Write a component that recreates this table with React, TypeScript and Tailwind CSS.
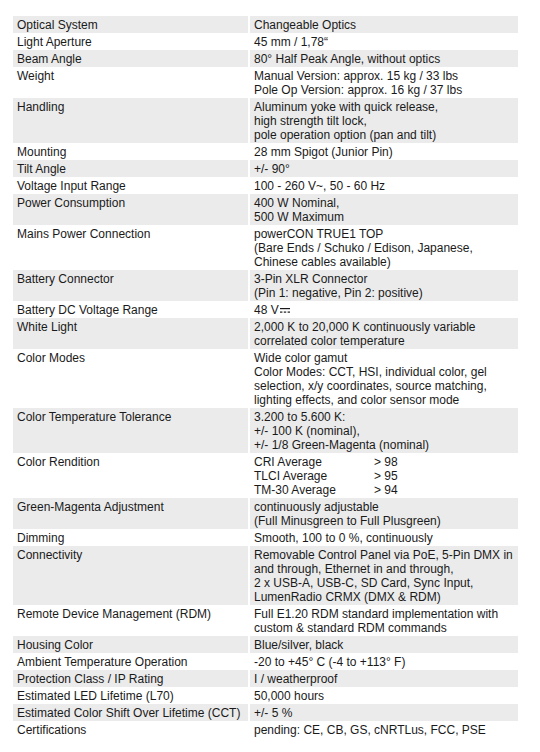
import React from 'react';

type Spec = { label: string; value: React.ReactNode };

const DcSign = () => (
  <svg className="inline-block ml-[1px] align-baseline" width="10" height="7" viewBox="0 0 10 7">
    <rect x="0" y="1" width="10" height="1.2" fill="currentColor" />
    <rect x="0" y="4.5" width="2.4" height="1.2" fill="currentColor" />
    <rect x="3.8" y="4.5" width="2.4" height="1.2" fill="currentColor" />
    <rect x="7.6" y="4.5" width="2.4" height="1.2" fill="currentColor" />
  </svg>
);

const rendition = [
  ['CRI Average', '> 98'],
  ['TLCI Average', '> 95'],
  ['TM-30 Average', '> 94'],
];

const specs: Spec[] = [
  { label: 'Optical System', value: 'Changeable Optics' },
  { label: 'Light Aperture', value: '45 mm / 1,78“' },
  { label: 'Beam Angle', value: '80° Half Peak Angle, without optics' },
  { label: 'Weight', value: ['Manual Version: approx. 15 kg / 33 lbs', 'Pole Op Version: approx. 16 kg / 37 lbs'] as any },
  {
    label: 'Handling',
    value: ['Aluminum yoke with quick release,', 'high strength tilt lock,', 'pole operation option (pan and tilt)'] as any,
  },
  { label: 'Mounting', value: '28 mm Spigot (Junior Pin)' },
  { label: 'Tilt Angle', value: '+/- 90°' },
  { label: 'Voltage Input Range', value: '100 - 260 V~, 50 - 60 Hz' },
  { label: 'Power Consumption', value: ['400 W Nominal,', '500 W Maximum'] as any },
  {
    label: 'Mains Power Connection',
    value: ['powerCON TRUE1 TOP', '(Bare Ends / Schuko / Edison, Japanese,', 'Chinese cables available)'] as any,
  },
  { label: 'Battery Connector', value: ['3-Pin XLR Connector', '(Pin 1: negative, Pin 2: positive)'] as any },
  {
    label: 'Battery DC Voltage Range',
    value: (
      <span>
        48 V<DcSign />
      </span>
    ),
  },
  { label: 'White Light', value: ['2,000 K to 20,000 K continuously variable', 'correlated color temperature'] as any },
  {
    label: 'Color Modes',
    value: [
      'Wide color gamut',
      'Color Modes: CCT, HSI, individual color, gel',
      'selection, x/y coordinates, source matching,',
      'lighting effects, and color sensor mode',
    ] as any,
  },
  {
    label: 'Color Temperature Tolerance',
    value: ['3.200 to 5.600 K:', '+/- 100 K (nominal),', '+/- 1/8 Green-Magenta (nominal)'] as any,
  },
  {
    label: 'Color Rendition',
    value: (
      <div>
        {rendition.map(([k, v]) => (
          <div key={k} className="flex">
            <span className="w-[120px]">{k}</span>
            <span>{v}</span>
          </div>
        ))}
      </div>
    ),
  },
  { label: 'Green-Magenta Adjustment', value: ['continuously adjustable', '(Full Minusgreen to Full Plusgreen)'] as any },
  { label: 'Dimming', value: 'Smooth, 100 to 0 %, continuously' },
  {
    label: 'Connectivity',
    value: [
      'Removable Control Panel via PoE, 5-Pin DMX in',
      'and through, Ethernet in and through,',
      '2 x USB-A, USB-C, SD Card, Sync Input,',
      'LumenRadio CRMX (DMX & RDM)',
    ] as any,
  },
  {
    label: 'Remote Device Management (RDM)',
    value: ['Full E1.20 RDM standard implementation with', 'custom & standard RDM commands'] as any,
  },
  { label: 'Housing Color', value: 'Blue/silver, black' },
  { label: 'Ambient Temperature Operation', value: '-20 to +45° C (-4 to +113° F)' },
  { label: 'Protection Class / IP Rating', value: 'I / weatherproof' },
  { label: 'Estimated LED Lifetime (L70)', value: '50,000 hours' },
  { label: 'Estimated Color Shift Over Lifetime (CCT)', value: '+/- 5 %' },
  { label: 'Certifications', value: 'pending: CE, CB, GS, cNRTLus, FCC, PSE' },
];

const renderValue = (v: any) => {
  if (Array.isArray(v)) {
    return v.map((line: string) => <div key={line}>{line}</div>);
  }
  return v;
};

export default function App() {
  return (
    <div
      className="w-[540px] h-[752px] bg-white pt-[16px] pl-[13px] text-[12px] leading-[14px] text-[#1a1a1a]"
      style={{ fontFamily: '"Liberation Sans", Arial, sans-serif' }}
    >
      {specs.map((s, i) => {
        const bg = i % 2 === 0 ? 'bg-[#ebebeb]' : 'bg-white';
        return (
          <div key={s.label} className="flex gap-x-[2px]">
            <div className={`w-[235px] pl-[4px] pt-[2px] pb-[1px] ${bg}`}>{s.label}</div>
            <div className={`w-[268px] pl-[4px] pt-[2px] pb-[1px] ${bg}`}>{renderValue(s.value)}</div>
          </div>
        );
      })}
    </div>
  );
}
